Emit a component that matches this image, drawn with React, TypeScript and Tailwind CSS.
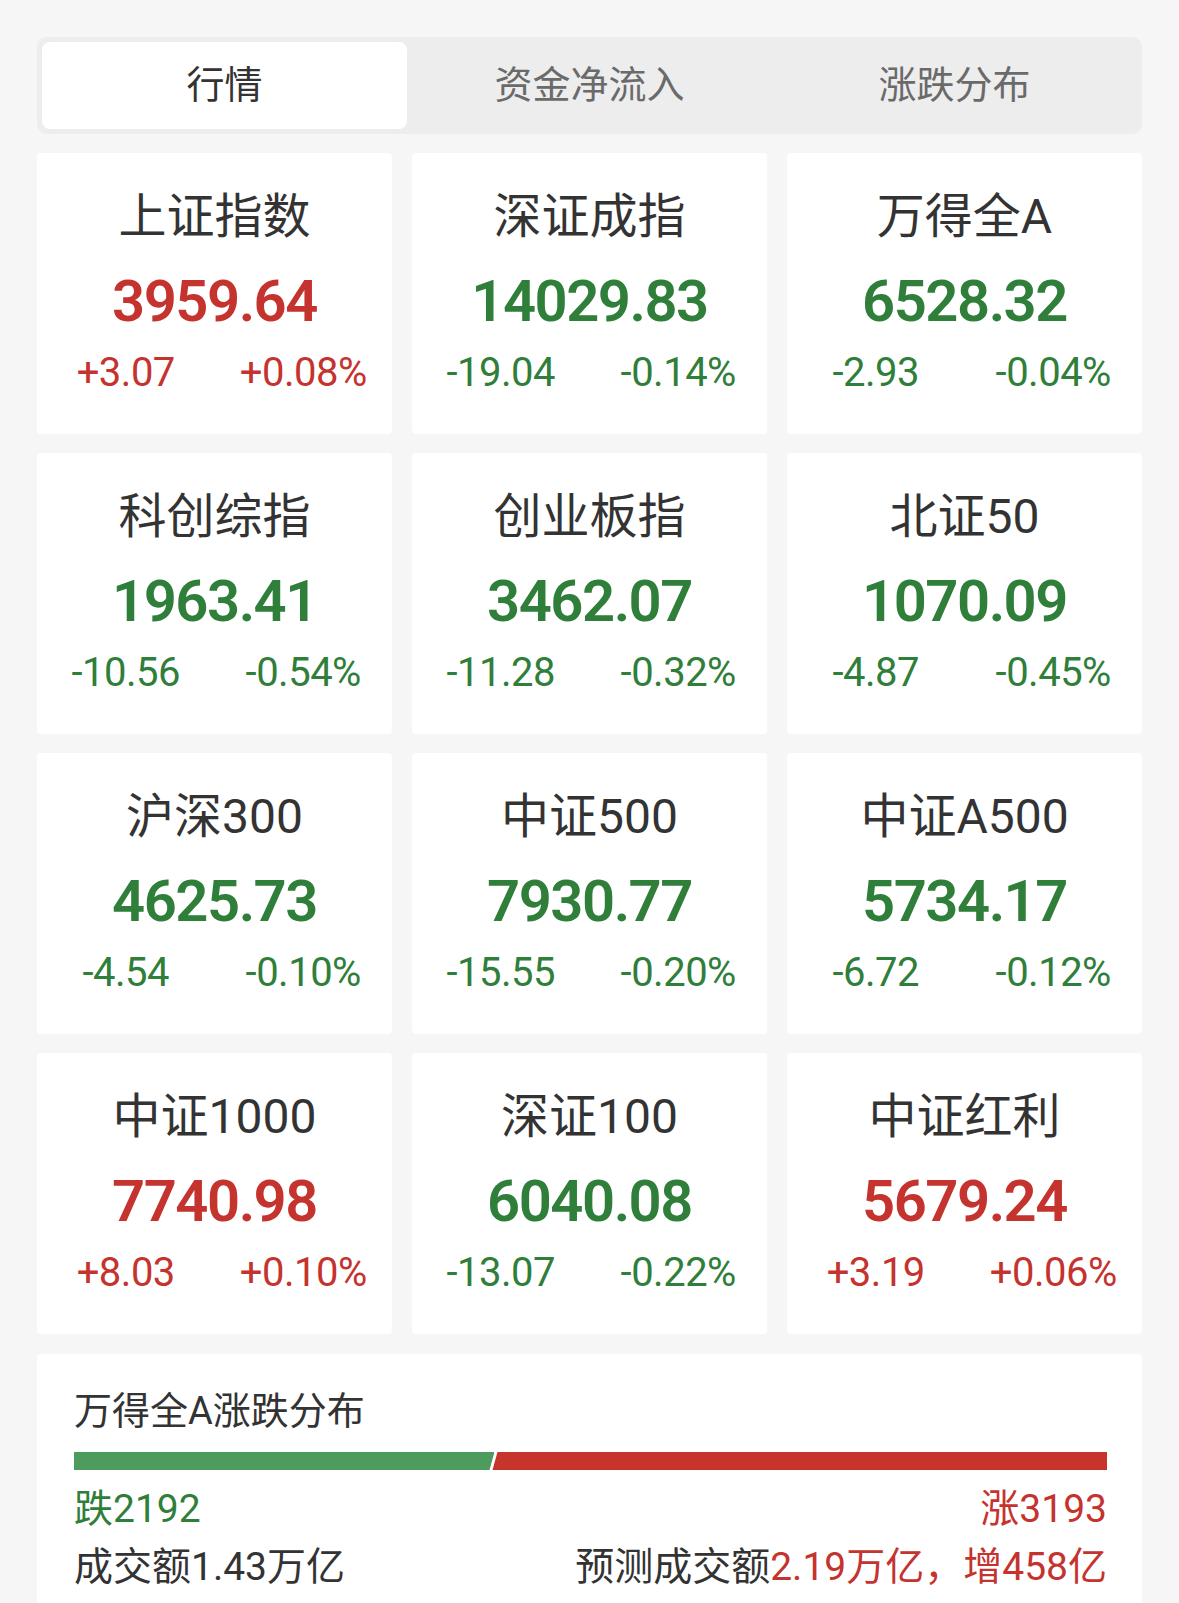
import React from "react";

type Item = { name: string; value: string; chg: string; pct: string; up: boolean };

const items: Item[] = [
  { name: "上证指数", value: "3959.64", chg: "+3.07", pct: "+0.08%", up: true },
  { name: "深证成指", value: "14029.83", chg: "-19.04", pct: "-0.14%", up: false },
  { name: "万得全A", value: "6528.32", chg: "-2.93", pct: "-0.04%", up: false },
  { name: "科创综指", value: "1963.41", chg: "-10.56", pct: "-0.54%", up: false },
  { name: "创业板指", value: "3462.07", chg: "-11.28", pct: "-0.32%", up: false },
  { name: "北证50", value: "1070.09", chg: "-4.87", pct: "-0.45%", up: false },
  { name: "沪深300", value: "4625.73", chg: "-4.54", pct: "-0.10%", up: false },
  { name: "中证500", value: "7930.77", chg: "-15.55", pct: "-0.20%", up: false },
  { name: "中证A500", value: "5734.17", chg: "-6.72", pct: "-0.12%", up: false },
  { name: "中证1000", value: "7740.98", chg: "+8.03", pct: "+0.10%", up: true },
  { name: "深证100", value: "6040.08", chg: "-13.07", pct: "-0.22%", up: false },
  { name: "中证红利", value: "5679.24", chg: "+3.19", pct: "+0.06%", up: true },
];

const FONT = "font-['Roboto','Noto_Sans_CJK_SC',sans-serif]";

function Card({ it }: { it: Item }) {
  const color = it.up ? "text-[#c5332f]" : "text-[#2f7e3a]";
  return (
    <div className="h-[281px] bg-white rounded-[4px] flex flex-col items-center pt-[36px]">
      <div className="text-[48px] leading-[56px] text-[#333333]">{it.name}</div>
      <div className={`mt-[24px] text-[58px] leading-[64px] font-semibold tracking-[-1.5px] ${color}`}>{it.value}</div>
      <div className={`mt-[18px] w-full grid grid-cols-2 text-[40px] leading-[44px] tracking-[-0.5px] ${color}`}>
        <div className="text-center">{it.chg}</div>
        <div className="text-center">{it.pct}</div>
      </div>
    </div>
  );
}

export default function App() {
  const down = 2192;
  const up = 3193;
  const downPct = (down / (down + up)) * 100;
  return (
    <div className={`min-h-[1603px] h-[1603px] overflow-hidden bg-[#f6f6f6] px-[37px] pt-[37px] ${FONT}`}>
      <div className="h-[97px] bg-[#ededed] rounded-[10px] p-[5px] grid grid-cols-3">
        <div className="bg-white rounded-[8px] flex items-center justify-center text-[38px] text-[#333333]">行情</div>
        <div className="flex items-center justify-center text-[38px] text-[#6a6a6a]">资金净流入</div>
        <div className="flex items-center justify-center text-[38px] text-[#6a6a6a]">涨跌分布</div>
      </div>

      <div className="mt-[19px] grid grid-cols-3 gap-x-[20px] gap-y-[19px]">
        {items.map((it) => (
          <Card key={it.name} it={it} />
        ))}
      </div>

      <div className="mt-[20px] bg-white rounded-[4px] pl-[37px] pr-[35px] pt-[33px] pb-[40px]">
        <div className="text-[38px] leading-[48px] text-[#333333]">万得全A涨跌分布</div>
        <div className="mt-[17px] h-[18px] flex">
          <div
            className="h-full bg-[#4d9b5d] [clip-path:polygon(0_0,100%_0,calc(100%-5px)_100%,0_100%)]"
            style={{ width: `${downPct}%` }}
          />
          <div className="h-full flex-1 ml-[-2px] bg-[#c6342b] [clip-path:polygon(5px_0,100%_0,100%_100%,0_100%)]" />
        </div>
        <div className="mt-[16px] flex justify-between text-[39px] leading-[46px]">
          <div className="text-[#2f7e3a]">跌{down}</div>
          <div className="text-[#c5332f]">涨{up}</div>
        </div>
        <div className="mt-[12px] flex justify-between text-[39px] leading-[46px] text-[#333333]">
          <div>成交额1.43万亿</div>
          <div>
            预测成交额<span className="text-[#c5332f]">2.19万亿，增458亿</span>
          </div>
        </div>
      </div>
    </div>
  );
}
